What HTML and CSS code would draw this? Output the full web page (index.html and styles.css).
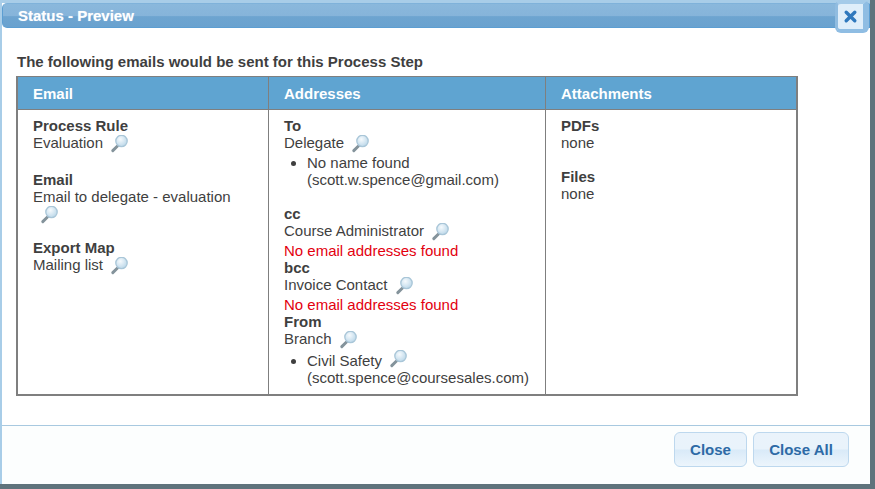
FILE: index.html
```html
<!DOCTYPE html>
<html lang="en">
<head>
<meta charset="utf-8">
<title>Status - Preview</title>
<link rel="stylesheet" href="styles.css">
</head>
<body>
<svg class="defs" width="0" height="0" aria-hidden="true">
  <defs>
    <radialGradient id="lens" cx="40%" cy="35%" r="70%">
      <stop offset="0" stop-color="#f6fafd"/>
      <stop offset="1" stop-color="#b9d6e8"/>
    </radialGradient>
    <symbol id="mag" viewBox="0 0 19 19">
      <path d="M7.5 11 L2.8 15.6" stroke="#84939b" stroke-width="3" stroke-linecap="round"/>
      <circle cx="11.5" cy="6" r="5.7" fill="url(#lens)" stroke="#a9c6d8" stroke-width="1.3"/>
    </symbol>
  </defs>
</svg>
<div class="dialog">
  <header class="titlebar">
    <span class="title">Status - Preview</span>
    <button class="x" aria-label="Close">
      <svg width="15" height="15" viewBox="0 0 15 15"><path d="M3.2 3.2 L11.8 11.8 M11.8 3.2 L3.2 11.8" stroke="#2f78bd" stroke-width="3.4" stroke-linecap="round"/></svg>
    </button>
  </header>
  <main class="content">
    <h1 class="lead">The following emails would be sent for this Process Step</h1>
    <table class="grid">
      <thead>
        <tr><th class="c1">Email</th><th class="c2">Addresses</th><th class="c3">Attachments</th></tr>
      </thead>
      <tbody>
        <tr>
          <td>
            <div class="block">
              <b>Process Rule</b>
              <div>Evaluation <svg class="mag"><use href="#mag"/></svg></div>
            </div>
            <div class="block tight">
              <b>Email</b>
              <div>Email to delegate - evaluation <svg class="mag wrapped"><use href="#mag"/></svg></div>
            </div>
            <div class="block">
              <b>Export Map</b>
              <div>Mailing list <svg class="mag"><use href="#mag"/></svg></div>
            </div>
          </td>
          <td>
            <b>To</b>
            <div>Delegate <svg class="mag"><use href="#mag"/></svg></div>
            <ul><li>No name found<br>(scott.w.spence@gmail.com)</li></ul>
            <b>cc</b>
            <div>Course Administrator <svg class="mag"><use href="#mag"/></svg></div>
            <div class="err">No email addresses found</div>
            <b>bcc</b>
            <div>Invoice Contact <svg class="mag"><use href="#mag"/></svg></div>
            <div class="err">No email addresses found</div>
            <b>From</b>
            <div>Branch <svg class="mag"><use href="#mag"/></svg></div>
            <ul class="last"><li>Civil Safety <svg class="mag up"><use href="#mag"/></svg><br>(scott.spence@coursesales.com)</li></ul>
          </td>
          <td>
            <div class="block">
              <b>PDFs</b>
              <div>none</div>
            </div>
            <div class="block">
              <b>Files</b>
              <div>none</div>
            </div>
          </td>
        </tr>
      </tbody>
    </table>
  </main>
  <footer class="footer">
    <button class="btn b1">Close</button>
    <button class="btn b2">Close All</button>
  </footer>
</div>
</body>
</html>
```
FILE: styles.css
```css
html, body { margin: 0; padding: 0; }
body {
  width: 875px;
  height: 489px;
  overflow: hidden;
  background: #5f737c;
  font-family: "Liberation Sans", Arial, sans-serif;
  color: #3f3f3f;
}
.defs { position: absolute; }
.dialog {
  width: 870px;
  height: 484px;
  box-sizing: border-box;
  background: #fff;
  border-left: 2px solid #a8cde8;
  border-top: 3px solid #a8cde8;
  border-bottom-right-radius: 4px;
  display: flex;
  flex-direction: column;
  position: relative;
}
.titlebar {
  height: 25px;
  box-sizing: border-box;
  border: 1px solid #5c9ed2;
  border-top-color: #7fb2da;
  border-radius: 5px 0 0 5px;
  background: linear-gradient(#8ab8dc 0, #86b4da 50%, #6da4d0 55%, #6aa2cf 100%);
  padding: 0 0 0 15px;
  display: flex;
  align-items: center;
  flex: none;
}
.title { color: #fff; font-weight: bold; font-size: 15px; text-shadow: 0 0 1px rgba(255,255,255,.5); }
.x {
  position: absolute;
  left: 833px;
  top: -3px;
  width: 34px;
  height: 33px;
  box-sizing: border-box;
  border-style: solid;
  border-width: 4px 6px 4px 3px;
  border-color: #a5cbe9 #8fbde3 #8fbde3 #90bce0;
  border-radius: 6px;
  background: #dfeefa;
  padding: 0;
  display: flex;
  align-items: center;
  justify-content: center;
}
.content { flex: 1; padding: 25px 0 0 14px; }
.lead { margin: 0 0 6px 1px; font-size: 15px; font-weight: bold; line-height: 17px; color: #3f3f3f; }
.grid {
  width: 782px;
  border-collapse: collapse;
  table-layout: fixed;
  font-size: 15px;
  line-height: 17px;
  border: 2px solid #7f7f7f;
  border-top-width: 1px;
}
.grid th, .grid td { border: 1px solid #7f7f7f; text-align: left; vertical-align: top; }
.grid th { background: #5fa4d1; color: #fff; height: 32px; padding: 0 15px; vertical-align: middle; }
.c1 { width: 220px; }
.c2 { width: 246px; }
.grid td { padding: 7px 15px 0; height: 285px; box-sizing: border-box; }
.block { margin-bottom: 17px; }
.block.tight { margin-bottom: 14px; }
.grid b { display: block; }
.err { color: #e3000f; }
ul { margin: 0 0 17px; padding: 0 0 0 23px; }
ul.last { margin: 0; }
.mag { width: 19px; height: 19px; vertical-align: -6px; margin-left: 3px; }
.mag.up { vertical-align: -3px; }
.mag.wrapped { margin-left: 7px; }
.footer {
  flex: none;
  height: 59px;
  box-sizing: border-box;
  border-top: 1px solid #a8c9e0;
  background: #fcfefe;
  display: flex;
  justify-content: flex-end;
  gap: 6px;
  padding: 6px 21px 0 0;
}
.btn {
  height: 35px;
  box-sizing: border-box;
  border: 1px solid #bdd8ee;
  border-radius: 6px;
  background: linear-gradient(#eaf3fb 0, #e9f3fb 48%, #d9eaf8 52%, #ecf5fc 100%);
  color: #2d6aa6;
  font: bold 15px "Liberation Sans", Arial, sans-serif;
  padding: 0;
}
.b1 { width: 73px; }
.b2 { width: 96px; }
```
